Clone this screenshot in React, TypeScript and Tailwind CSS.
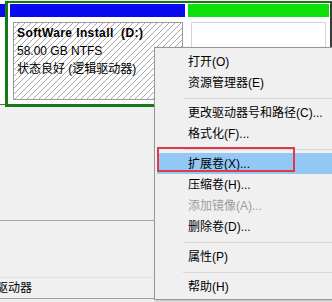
const font = "font-['Liberation_Sans','Noto_Sans_CJK_SC',sans-serif]"

type Item = { label: string; disabled?: boolean; active?: boolean } | "sep"

const menu: Item[] = [
  { label: "打开(O)" },
  { label: "资源管理器(E)" },
  "sep",
  { label: "更改驱动器号和路径(C)..." },
  { label: "格式化(F)..." },
  "sep",
  { label: "扩展卷(X)...", active: true },
  { label: "压缩卷(H)..." },
  { label: "添加镜像(A)...", disabled: true },
  { label: "删除卷(D)..." },
  "sep",
  { label: "属性(P)" },
  "sep",
  { label: "帮助(H)" },
]

export default function App() {
  return (
    <div className={`relative w-[332px] h-[302px] overflow-hidden bg-[#f0f0f0] text-black ${font}`}>
      {/* disk strip */}
      <div className="flex h-[107px]">
        {/* previous partition stub */}
        <div className="w-[5px] bg-white border-b border-[#606060] h-[105px]">
          <div className="mt-[4px] h-[13px] bg-[#0a0af0]" />
        </div>
        {/* extended partition frame */}
        <div className="mt-[1px] flex-1 h-[106px] flex bg-white border-t-2 border-l-[3px] border-b-[3px] border-[#157a15] border-r-2 border-r-[#3a3a3a]">
          {/* D: partition */}
          <div className="ml-[2px] w-[175px] flex flex-col">
            <div className="mt-[1px] h-[13px] bg-[#0a0af0]" />
            <div className="mt-[5px] ml-[3px] w-[170px] h-[78px] border border-[#9a9a9a] pl-[3px] pt-px bg-[repeating-linear-gradient(135deg,#ffffff_0px,#ffffff_3.2px,#a9a9a9_3.2px,#a9a9a9_4.24px)]">
              <div className="h-[18px] leading-[18px] text-[12px] font-bold whitespace-pre tracking-[0.4px]">SoftWare Install  (D:)</div>
              <div className="h-[18px] leading-[18px] text-[12px]">58.00 GB NTFS</div>
              <div className="h-[18px] leading-[18px] text-[12px]">状态良好 (逻辑驱动器)</div>
            </div>
          </div>
          {/* free space */}
          <div className="ml-[3px] flex-1 flex flex-col pr-[1px]">
            <div className="mt-[1px] h-[13px] bg-[#0be00b]" />
            <div className="mt-[5px] mx-[3px] h-[78px] border border-[#d4d4d4] bg-white" />
          </div>
        </div>
      </div>

      {/* lower panes */}
      <div className="h-[113px]" />
      <div className="h-px bg-[#a6a6a6]" />
      <div className="h-[56px]" />
      <div className="h-px bg-[#e2e2e2]" />
      <div className="h-[20px] flex items-center overflow-hidden">
        <span className="ml-[-4px] text-[12px] leading-none">驱动器</span>
      </div>
      <div className="h-px bg-[#a0a0a0]" />

      {/* context menu */}
      <div className="absolute left-[154px] top-[47px] w-[200px] h-[253px] border border-[#979797] bg-[#f0f0f0] pt-[3px] pb-[2px] shadow-[1px_1px_2px_rgba(0,0,0,0.25)]">
        {menu.map((it, i) =>
          it === "sep" ? (
            <div key={i} className="h-[9px] pt-[5px]">
              <div className="ml-[28px] h-px bg-[#d7d7d7]" />
            </div>
          ) : (
            <div
              key={i}
              className={`h-[21px] flex items-center text-[12px] leading-none whitespace-nowrap ${
                it.active ? "mx-[2px] pl-[31px] bg-[#93c7f4]" : "pl-[33px]"
              } ${it.disabled ? "text-[#9c9c9c]" : "text-black"}`}
            >
              {it.label}
            </div>
          )
        )}
      </div>

      {/* red annotation box */}
      <div className="absolute left-[157px] top-[147px] w-[138px] h-[25px] border-2 border-[#e0394a]" />
    </div>
  )
}
